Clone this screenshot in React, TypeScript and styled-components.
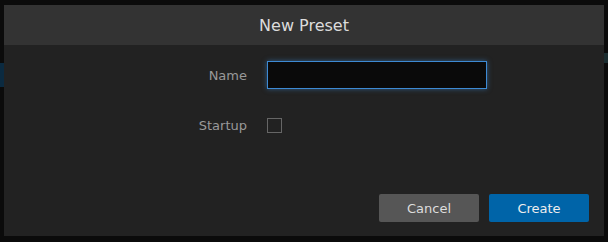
import React from 'react';
import styled, { createGlobalStyle } from 'styled-components';

const GlobalStyle = createGlobalStyle`
    html, body {
        margin: 0;
        padding: 0;
        background: #0b0b0b;
        font-family: "DejaVu Sans", Verdana, sans-serif;
    }
`;

const Backdrop = styled.div`
    display: grid;
    grid-template-columns: 4px 600px 4px;
    padding: 5px 0 6px 0;
    width: 608px;
    height: 242px;
    box-sizing: border-box;
`;

const EdgeColumn = styled.div<{ $top: number; $height: number; $color: string }>`
    position: relative;
    &::after {
        content: '';
        display: block;
        margin-top: ${p => p.$top}px;
        height: ${p => p.$height}px;
        background: ${p => p.$color};
    }
`;

const Modal = styled.div`
    display: flex;
    flex-direction: column;
    background: #222222;
    height: 231px;
`;

const Header = styled.div`
    height: 40px;
    background: #333333;
    display: flex;
    align-items: center;
    justify-content: center;
    color: #dcdcdc;
    font-size: 16px;
`;

const Form = styled.div`
    display: grid;
    grid-template-columns: 243px 220px;
    grid-auto-rows: 28px;
    column-gap: 20px;
    row-gap: 22px;
    align-items: center;
    padding-top: 16px;
`;

const Label = styled.label`
    text-align: right;
    color: #999999;
    font-size: 13px;
`;

const TextInput = styled.input`
    box-sizing: border-box;
    width: 220px;
    height: 28px;
    background: #0a0a0a;
    border: 1px solid #3d8ad4;
    box-shadow: 0 0 5px rgba(61, 138, 212, 0.55);
    outline: none;
    color: #ddd;
    font-family: inherit;
    font-size: 13px;
    padding: 0 6px;
    margin: 0;
`;

const CheckBox = styled.span`
    display: block;
    width: 13px;
    height: 13px;
    border: 1px solid #666666;
    background: transparent;
`;

const Footer = styled.div`
    margin-top: auto;
    display: flex;
    justify-content: flex-end;
    gap: 10px;
    padding: 0 15px 14px 0;
`;

const Button = styled.button<{ $primary?: boolean }>`
    width: 100px;
    height: 28px;
    border: none;
    border-radius: 2px;
    background: ${p => p.$primary ? '#0064a8' : '#565656'};
    color: ${p => p.$primary ? '#eeeeee' : '#dddddd'};
    font-family: inherit;
    font-size: 13px;
    cursor: pointer;
    padding: 0;
`;

export default function App() {
    return (
        <>
            <GlobalStyle />
            <Backdrop>
                <EdgeColumn $top={58} $height={24} $color="#0b2a40" />
                <Modal>
                    <Header>New Preset</Header>
                    <Form>
                        <Label>Name</Label>
                        <TextInput type="text" />
                        <Label>Startup</Label>
                        <CheckBox />
                    </Form>
                    <Footer>
                        <Button>Cancel</Button>
                        <Button $primary>Create</Button>
                    </Footer>
                </Modal>
                <EdgeColumn $top={48} $height={10} $color="#1b2d30" />
            </Backdrop>
        </>
    );
}
